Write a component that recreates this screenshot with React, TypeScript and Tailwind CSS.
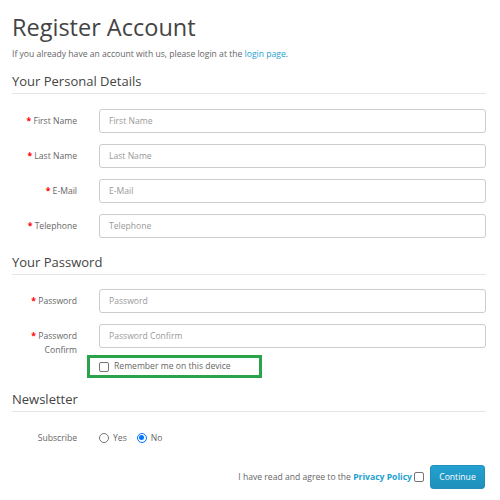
import React from "react";

function Field({ label, placeholder }: { label: string; placeholder: string }) {
  return (
    <div className="flex h-[24px]">
      <div className="w-[65px] shrink-0 text-right pt-[5px] leading-[14px] text-[#666]">
        <span className="text-[#f00] font-bold">*</span> {label}
      </div>
      <input
        readOnly
        placeholder={placeholder}
        className="ml-[22px] flex-1 min-w-0 h-[24px] border border-[#ccc] rounded-[3px] pl-[9px] text-[8.6px] text-[#555] placeholder:text-[#999] outline-none bg-white font-['Open_Sans',sans-serif]"
      />
    </div>
  );
}

function Legend({ children, className }: { children: React.ReactNode; className: string }) {
  return (
    <div className={`text-[13px] leading-[16px] pb-[4px] border-b border-[#e5e5e5] text-[#444] ${className}`}>
      {children}
    </div>
  );
}

export default function App() {
  return (
    <div className="w-[500px] h-[500px] bg-white overflow-hidden pl-[12px] pr-[14px] pt-[14px] text-[#666] text-[8.6px] font-['Open_Sans',sans-serif] flex flex-col">
      <h1 className="text-[23.5px] leading-[26px] h-[26px] text-[#444] font-normal">Register Account</h1>
      <p className="mt-[8px] leading-[12px] text-[#666]">
        If you already have an account with us, please login at the{" "}
        <span className="text-[#23a1d1]">login page</span>.
      </p>

      <Legend className="mt-[13px]">Your Personal Details</Legend>
      <div className="mt-[15px] flex flex-col gap-[11px]">
        <Field label="First Name" placeholder="First Name" />
        <Field label="Last Name" placeholder="Last Name" />
        <Field label="E-Mail" placeholder="E-Mail" />
        <Field label="Telephone" placeholder="Telephone" />
      </div>

      <Legend className="mt-[16px]">Your Password</Legend>
      <div className="mt-[14px] flex flex-col gap-[11px]">
        <Field label="Password" placeholder="Password" />
        <Field label="Password Confirm" placeholder="Password Confirm" />
      </div>

      <div className="mt-[7px] ml-[75px] w-[175px] h-[23px] border-[3px] border-[#2ba24c] flex items-center pl-[9px]">
        <span className="w-[10px] h-[10px] border border-[#767676] rounded-[2px] bg-white shrink-0" />
        <span className="ml-[5px] text-[#666]">Remember me on this device</span>
      </div>

      <Legend className="mt-[13px]">Newsletter</Legend>
      <div className="mt-[14px] h-[24px] flex items-center">
        <div className="w-[65px] shrink-0 text-right text-[#666]">Subscribe</div>
        <div className="ml-[22px] flex items-center">
          <span className="w-[10px] h-[10px] rounded-full border border-[#767676] bg-white shrink-0" />
          <span className="ml-[4px] text-[#666]">Yes</span>
          <span className="ml-[10px] w-[10px] h-[10px] rounded-full border-[1.5px] border-[#0075ff] bg-white shrink-0 flex items-center justify-center">
            <span className="w-[5px] h-[5px] rounded-full bg-[#0075ff]" />
          </span>
          <span className="ml-[4px] text-[#666]">No</span>
        </div>
      </div>

      <div className="mt-[15px] flex items-center justify-end pr-[1px]">
        <span className="text-[#666]">
          I have read and agree to the{" "}
          <span className="text-[#23a1d1] font-bold">Privacy Policy</span>
        </span>
        <span className="ml-[2px] w-[10px] h-[10px] border border-[#767676] rounded-[2px] bg-white shrink-0" />
        <div className="ml-[6px] w-[55px] h-[24px] rounded-[3px] border border-[#1f90bb] bg-gradient-to-b from-[#23a1d1] to-[#1f90bb] text-white flex items-center justify-center">
          Continue
        </div>
      </div>
    </div>
  );
}
